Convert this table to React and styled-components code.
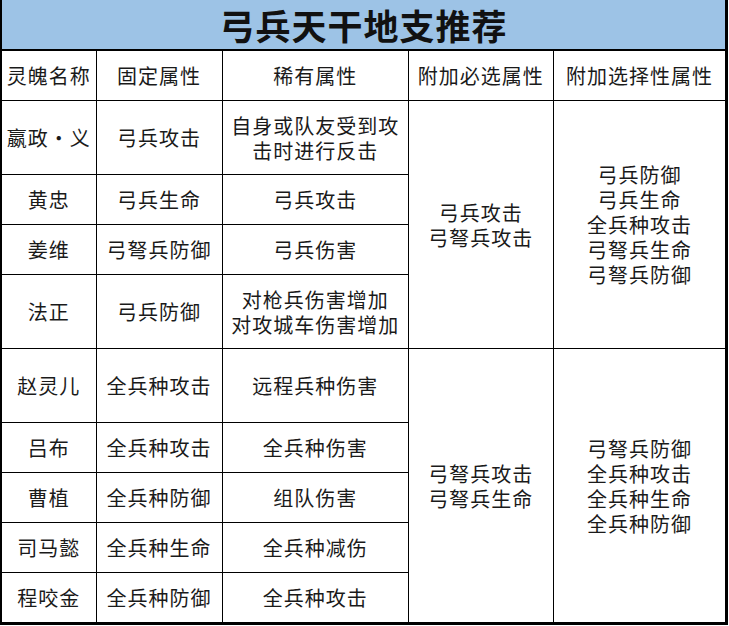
import React from "react";
import styled, { createGlobalStyle } from "styled-components";

const GlobalStyle = createGlobalStyle`
  html, body {
    margin: 0;
    padding: 0;
    background: #fff;
  }
  body {
    font-family: "Noto Sans CJK SC", "Noto Sans", sans-serif;
    color: #000;
  }
`;

const Sheet = styled.table`
  border-collapse: collapse;
  table-layout: fixed;
  width: 728px;
  border-left: 2px solid #000;
  border-right: 3px solid #000;
  border-bottom: 3px solid #000;
`;

const TitleCell = styled.th`
  height: 49px;
  padding: 0;
  background: #9dc3e6;
  border-bottom: 2px solid #000;
  font-size: 35px;
  font-weight: 700;
  letter-spacing: 1px;
  line-height: 49px;
  text-align: center;
  color: #111;
`;

const Cell = styled.td`
  height: ${(p) => p.$h - 1}px;
  padding: 0;
  border: 1px solid #000;
  text-align: center;
  vertical-align: middle;
  font-size: 20px;
  letter-spacing: 1px;
  line-height: 25px;
  white-space: nowrap;
  color: #1a1a1a;
`;

const rows = [
  { name: "嬴政・义", fixed: "弓兵攻击", rare: ["自身或队友受到攻", "击时进行反击"], h: 74 },
  { name: "黄忠", fixed: "弓兵生命", rare: ["弓兵攻击"], h: 50 },
  { name: "姜维", fixed: "弓弩兵防御", rare: ["弓兵伤害"], h: 50 },
  { name: "法正", fixed: "弓兵防御", rare: ["对枪兵伤害增加", "对攻城车伤害增加"], h: 74 },
  { name: "赵灵儿", fixed: "全兵种攻击", rare: ["远程兵种伤害"], h: 74 },
  { name: "吕布", fixed: "全兵种攻击", rare: ["全兵种伤害"], h: 50 },
  { name: "曹植", fixed: "全兵种防御", rare: ["组队伤害"], h: 50 },
  { name: "司马懿", fixed: "全兵种生命", rare: ["全兵种减伤"], h: 50 },
  { name: "程咬金", fixed: "全兵种防御", rare: ["全兵种攻击"], h: 50 },
];

const groups = {
  0: {
    span: 4,
    must: ["弓兵攻击", "弓弩兵攻击"],
    pick: ["弓兵防御", "弓兵生命", "全兵种攻击", "弓弩兵生命", "弓弩兵防御"],
  },
  4: {
    span: 5,
    must: ["弓弩兵攻击", "弓弩兵生命"],
    pick: ["弓弩兵防御", "全兵种攻击", "全兵种生命", "全兵种防御"],
  },
};

const Lines = ({ items }) =>
  items.map((t, i) => (
    <React.Fragment key={i}>
      {i > 0 && <br />}
      {t}
    </React.Fragment>
  ));

export default function App() {
  return (
    <>
      <GlobalStyle />
      <Sheet>
        <colgroup>
          <col style={{ width: 95 }} />
          <col style={{ width: 126 }} />
          <col style={{ width: 186 }} />
          <col style={{ width: 145 }} />
          <col style={{ width: 173 }} />
        </colgroup>
        <thead>
          <tr>
            <TitleCell colSpan={5}>弓兵天干地支推荐</TitleCell>
          </tr>
        </thead>
        <tbody>
          <tr>
            <Cell $h={50}>灵魄名称</Cell>
            <Cell $h={50}>固定属性</Cell>
            <Cell $h={50}>稀有属性</Cell>
            <Cell $h={50}>附加必选属性</Cell>
            <Cell $h={50}>附加选择性属性</Cell>
          </tr>
          {rows.map((r, i) => {
            const g = groups[i];
            return (
              <tr key={r.name}>
                <Cell $h={r.h}>{r.name}</Cell>
                <Cell $h={r.h}>{r.fixed}</Cell>
                <Cell $h={r.h}>
                  <Lines items={r.rare} />
                </Cell>
                {g && (
                  <Cell $h={r.h} rowSpan={g.span}>
                    <Lines items={g.must} />
                  </Cell>
                )}
                {g && (
                  <Cell $h={r.h} rowSpan={g.span}>
                    <Lines items={g.pick} />
                  </Cell>
                )}
              </tr>
            );
          })}
        </tbody>
      </Sheet>
    </>
  );
}
